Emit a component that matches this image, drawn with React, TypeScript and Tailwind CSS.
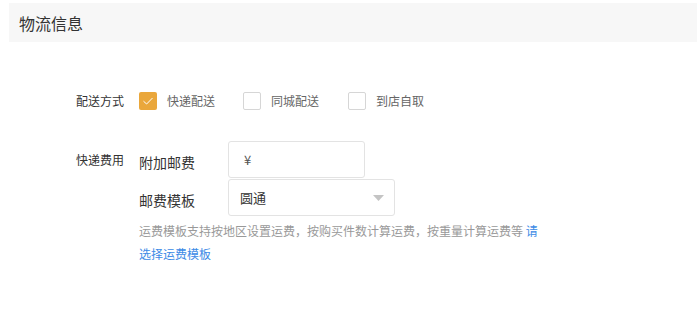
import React from "react";

const font = { fontFamily: '"Noto Sans CJK SC", "Noto Sans", sans-serif' };

function Check({ checked, label }: { checked?: boolean; label: string }) {
  return (
    <label className="flex items-center">
      {checked ? (
        <span className="flex h-[18px] w-[18px] items-center justify-center rounded-[2px] bg-[#eaa73b]">
          <svg width="12" height="10" viewBox="0 0 12 10" fill="none">
            <path d="M1.5 5.2 L4.6 8 L10.5 2" stroke="#fff" strokeWidth="1" />
          </svg>
        </span>
      ) : (
        <span className="h-[18px] w-[18px] rounded-[2px] border border-[#d6d6d6] bg-white" />
      )}
      <span className="ml-[10px] text-[12px] text-[#666]">{label}</span>
    </label>
  );
}

export default function App() {
  return (
    <div className="h-[309px] w-[697px] bg-white text-[#333]" style={font}>
      <div className="pl-[9px] pt-[3px]">
        <div className="flex h-[39px] items-center bg-[#f7f7f7] pl-[10px] text-[16px] text-[#333]">
          物流信息
        </div>
      </div>

      <div className="pl-[76px]">
        <div className="mt-[50px] flex items-center">
          <span className="w-[63px] text-[12px] leading-[18px]">配送方式</span>
          <div className="flex items-center gap-[28px]">
            <Check checked label="快递配送" />
            <div>
              <Check label="同城配送" />
            </div>
            <div className="ml-px">
              <Check label="到店自取" />
            </div>
          </div>
        </div>

        <div className="mt-[31px] flex">
          <span className="w-[63px] pt-[10px] text-[12px] leading-[18px]">快递费用</span>
          <div className="flex flex-col">
            <div className="flex items-center">
              <span className="w-[89px] pt-[6px] text-[14px]">附加邮费</span>
              <div className="flex h-[37px] w-[137px] items-center rounded-[3px] border border-[#e3e3e3] pl-[15px] text-[13px] text-[#555]">
                ¥
              </div>
            </div>
            <div className="mt-px flex items-center">
              <span className="w-[89px] pt-[6px] text-[14px]">邮费模板</span>
              <div className="flex h-[37px] w-[167px] items-center justify-between rounded-[3px] border border-[#e3e3e3] pl-[11px] pr-[10px] text-[13px] text-[#333]">
                <span>圆通</span>
                <svg width="11" height="6" viewBox="0 0 11 6">
                  <path d="M0 0 H11 L5.5 6 Z" fill="#c4c4c4" />
                </svg>
              </div>
            </div>
            <p className="mt-[3px] w-[402px] text-[12px] leading-[23px] text-[#999]">
              运费模板支持按地区设置运费，按购买件数计算运费，按重量计算运费等{" "}
              <span className="text-[#3b8ae6]">请选择运费模板</span>
            </p>
          </div>
        </div>
      </div>
    </div>
  );
}
